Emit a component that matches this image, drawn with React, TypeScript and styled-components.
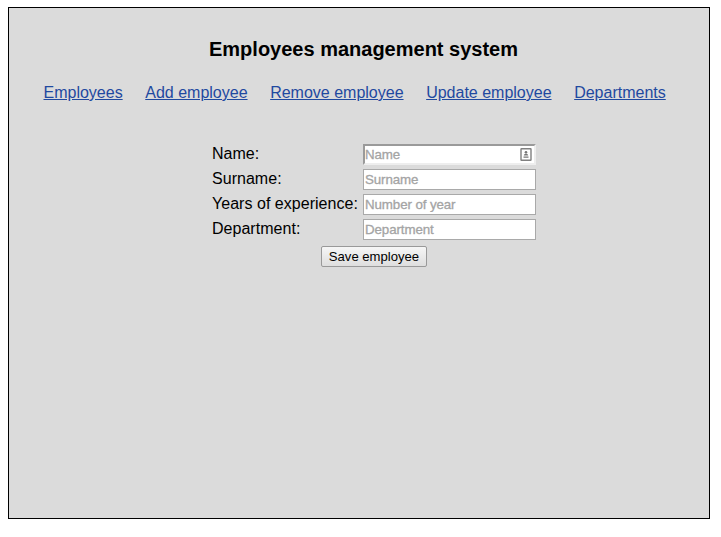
import React from "react";
import styled, { createGlobalStyle } from "styled-components";

const GlobalStyle = createGlobalStyle`
  body { margin: 0; background: #fff; font-family: "Liberation Sans", Arial, sans-serif; font-size: 16px; color: #000; overflow: hidden; }
`;
const Page = styled.main`
  box-sizing: border-box;
  width: 702px;
  height: 512px;
  margin: 7px 0 0 8px;
  border: 1px solid #000;
  background: #dbdbdb;
  overflow: hidden;
`;
const Title = styled.h1`
  margin: 29px 0 0;
  padding-left: 9px;
  font-size: 20px;
  line-height: 24px;
  text-align: center;
`;
const Nav = styled.nav`
  display: flex;
  gap: 22.6px;
  margin: 23px 0 0 34.5px;
  line-height: 18px;
  white-space: nowrap;
`;
const NavLink = styled.a`
  color: #1f49a0;
  text-decoration: underline;
`;
const Form = styled.form`
  display: grid;
  grid-template-columns: 149px 173px;
  column-gap: 2px;
  row-gap: 4px;
  margin: 42px 0 0 203px;
`;
const Label = styled.label`
  line-height: 19px;
  letter-spacing: 0.03px;
  white-space: nowrap;
`;
const Field = styled.div<{ $raised?: boolean }>`
  display: flex;
  box-sizing: border-box;
  align-items: center;
  justify-content: space-between;
  height: 21px;
  border: ${(p) => (p.$raised ? "2px inset #eee" : "1px solid #a9a9a9")};
  padding: ${(p) => (p.$raised ? "0 2px 0 0" : "0 1px")};
  background: #fff;
`;
const Input = styled.input`
  flex: 1;
  min-width: 0;
  border: 0;
  padding: 0;
  outline: 0;
  background: transparent;
  font: 13.33px "Liberation Sans", Arial, sans-serif;
  letter-spacing: -0.1px;
  &::placeholder { color: #a4a4a4; opacity: 1; -webkit-text-stroke: 0.3px #a4a4a4; }
`;
const Save = styled.button`
  display: block;
  width: 106px;
  height: 21px;
  margin: 6px 0 0 312px;
  border: 1px solid #999;
  border-radius: 2px;
  padding: 0;
  background: linear-gradient(#f6f6f6, #dedede);
  color: #000;
  font: 13.1px "Liberation Sans", Arial, sans-serif;
`;

const links = ["Employees", "Add employee", "Remove employee", "Update employee", "Departments"];
const fields = [
  ["Name:", "Name"],
  ["Surname:", "Surname"],
  ["Years of experience:", "Number of year"],
  ["Department:", "Department"],
];

function ContactIcon() {
  return (
    <svg width="12" height="13" viewBox="0 0 12 13">
      <rect x="1" y="0.7" width="10" height="11.6" rx="0.5" fill="#fff" stroke="#808080" strokeWidth="1.4" />
      <circle cx="6" cy="4.2" r="1.3" fill="#777" />
      <path d="M3.8 7.5c0-2.3 4.4-2.3 4.4 0zM3.5 8.6h5v1.2h-5z" fill="#777" />
    </svg>
  );
}

export default function App() {
  return (
    <>
      <GlobalStyle />
      <Page>
        <Title>Employees management system</Title>
        <Nav>
          {links.map((l) => (
            <NavLink key={l} href="#">{l}</NavLink>
          ))}
        </Nav>
        <Form>
          {fields.map(([label, hint], i) => (
            <React.Fragment key={label}>
              <Label>{label}</Label>
              <Field $raised={i === 0}>
                <Input placeholder={hint} aria-label={hint} />
                {i === 0 && <ContactIcon />}
              </Field>
            </React.Fragment>
          ))}
        </Form>
        <Save>Save employee</Save>
      </Page>
    </>
  );
}
